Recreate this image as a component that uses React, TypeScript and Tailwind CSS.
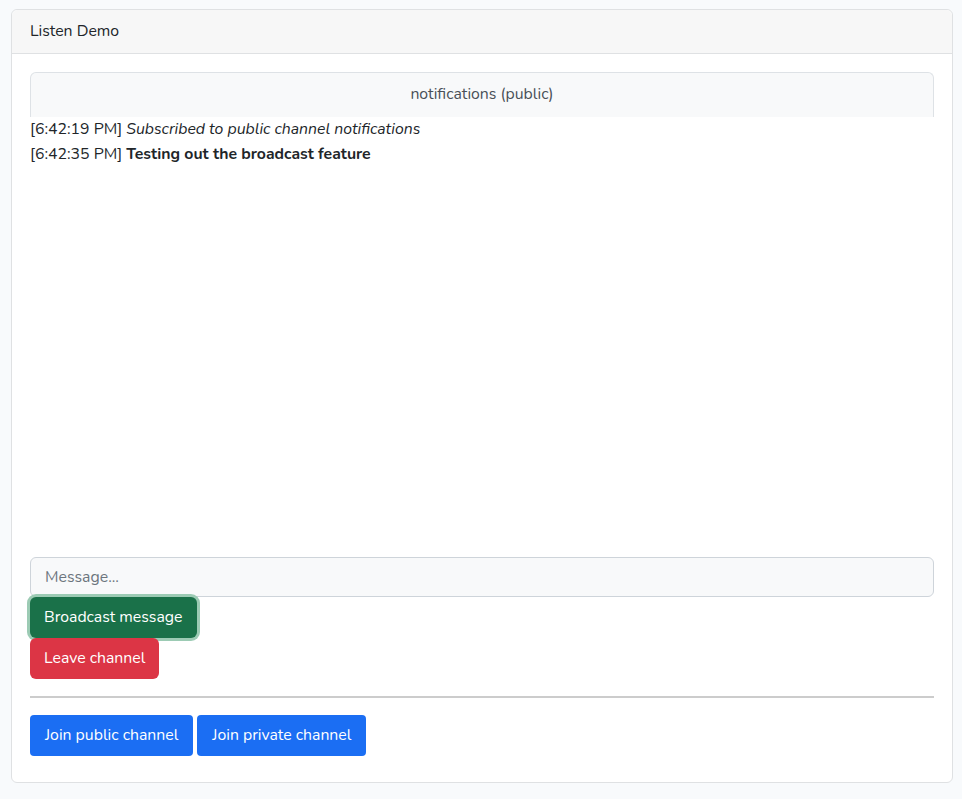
import { useState } from "react";

const App = () => {
  const [message, setMessage] = useState("");

  return (
    <div className="min-h-screen bg-[#f8fafc] pl-[11px] pr-[9px] pt-[9px] pb-4 font-['Nunito','Noto_Sans',sans-serif] text-[15.8px] text-[#212529]">
      <div className="flex flex-col rounded-[6px] border border-[#dfe1e3] bg-white">
        {/* Header */}
        <div className="flex h-[44px] items-center border-b border-[#dfe1e3] bg-[#f7f7f7] px-[18px] rounded-t-[6px]">
          Listen Demo
        </div>

        {/* Body */}
        <div className="flex flex-col px-[18px] pt-[18px] pb-[26px]">
          <div className="flex h-[45px] items-center justify-center rounded-t-[6px] border border-b-0 border-[#dee2e6] bg-[#f8f9fa] pb-[1px] text-[#495057]">
            notifications (public)
          </div>

          <div className="flex h-[440px] flex-col leading-[25px]">
            <div>
              [6:42:19 PM] <em>Subscribed to public channel notifications</em>
            </div>
            <div>
              [6:42:35 PM] <strong className="font-bold">Testing out the broadcast feature</strong>
            </div>
          </div>

          <input
            type="text"
            placeholder="Message..."
            value={message}
            onChange={(e) => setMessage(e.target.value)}
            className="h-[40px] w-full rounded-[6px] border border-[#ced4da] bg-[#f8f9fa] px-[14px] text-[15.8px] placeholder-[#6c757d] outline-none"
          />

          <div className="flex">
            <button className="h-[41px] rounded-[6px] bg-[#1a7149] px-[14px] text-white ring-[3px] ring-[#9ccbb4]">
              Broadcast message
            </button>
          </div>
          <div className="flex">
            <button className="h-[41px] rounded-[6px] bg-[#dc3545] px-[14px] text-white">
              Leave channel
            </button>
          </div>

          <hr className="mt-[17px] mb-[17px] border-t-2 border-[#cccccc]" />

          <div className="flex gap-[4px]">
            <button className="h-[41px] rounded-[4px] bg-[#1b6ef3] px-[15px] text-white">
              Join public channel
            </button>
            <button className="h-[41px] rounded-[4px] bg-[#1b6ef3] px-[15px] text-white">
              Join private channel
            </button>
          </div>
        </div>
      </div>
    </div>
  );
};

export default App;
